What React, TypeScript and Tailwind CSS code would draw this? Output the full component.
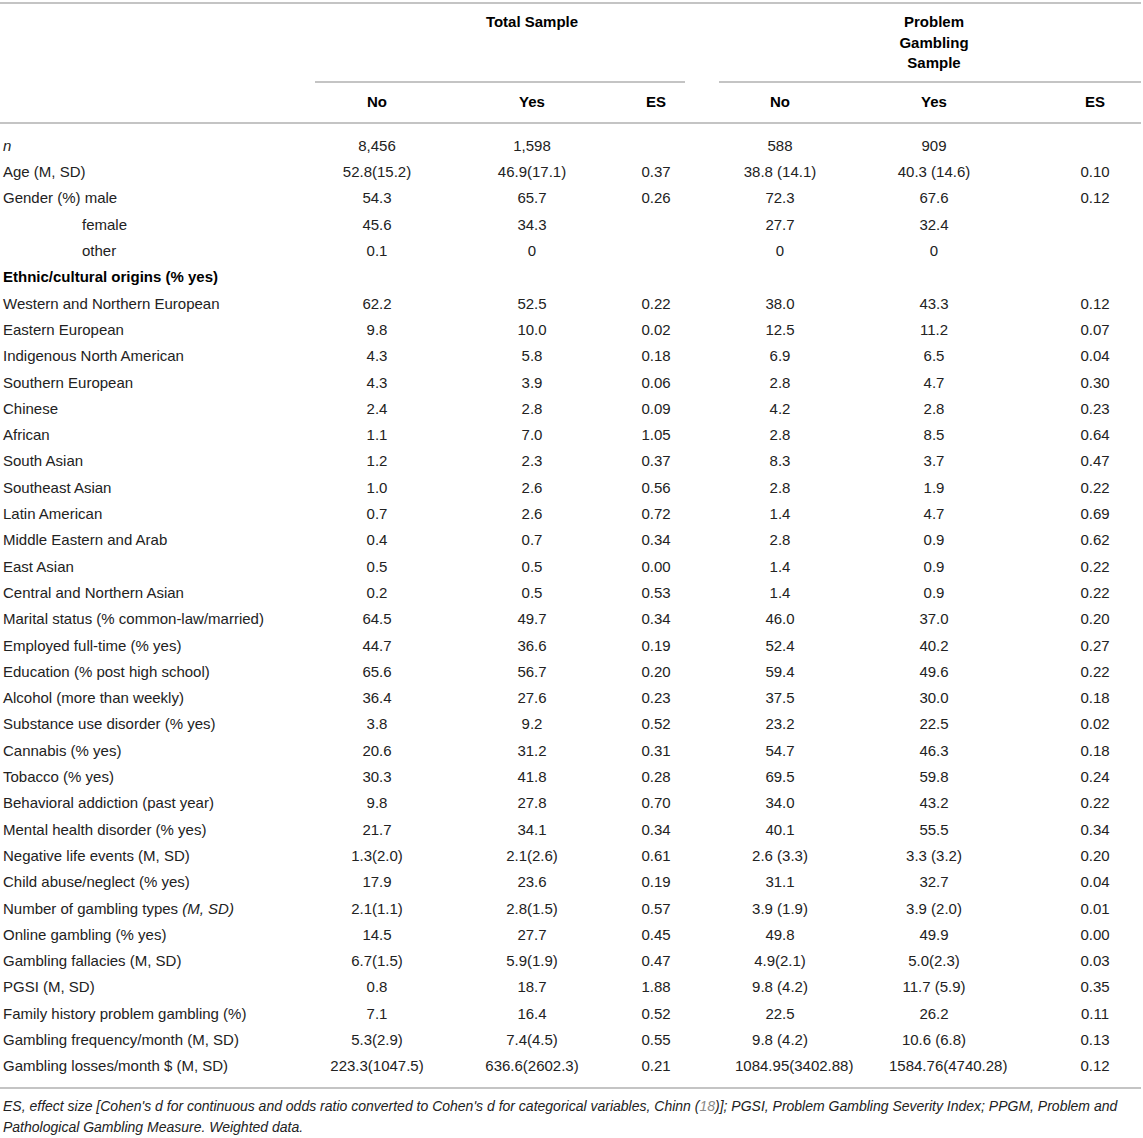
import React from "react";

type Row = {
  label: React.ReactNode;
  v: string[];
  indent?: boolean;
  bold?: boolean;
};

const rows: Row[] = [
  { label: <span className="italic">n</span>, v: ["8,456", "1,598", "", "588", "909", ""] },
  { label: "Age (M, SD)", v: ["52.8(15.2)", "46.9(17.1)", "0.37", "38.8 (14.1)", "40.3 (14.6)", "0.10"] },
  { label: "Gender (%) male", v: ["54.3", "65.7", "0.26", "72.3", "67.6", "0.12"] },
  { label: "female", indent: true, v: ["45.6", "34.3", "", "27.7", "32.4", ""] },
  { label: "other", indent: true, v: ["0.1", "0", "", "0", "0", ""] },
  { label: "Ethnic/cultural origins (% yes)", bold: true, v: ["", "", "", "", "", ""] },
  { label: "Western and Northern European", v: ["62.2", "52.5", "0.22", "38.0", "43.3", "0.12"] },
  { label: "Eastern European", v: ["9.8", "10.0", "0.02", "12.5", "11.2", "0.07"] },
  { label: "Indigenous North American", v: ["4.3", "5.8", "0.18", "6.9", "6.5", "0.04"] },
  { label: "Southern European", v: ["4.3", "3.9", "0.06", "2.8", "4.7", "0.30"] },
  { label: "Chinese", v: ["2.4", "2.8", "0.09", "4.2", "2.8", "0.23"] },
  { label: "African", v: ["1.1", "7.0", "1.05", "2.8", "8.5", "0.64"] },
  { label: "South Asian", v: ["1.2", "2.3", "0.37", "8.3", "3.7", "0.47"] },
  { label: "Southeast Asian", v: ["1.0", "2.6", "0.56", "2.8", "1.9", "0.22"] },
  { label: "Latin American", v: ["0.7", "2.6", "0.72", "1.4", "4.7", "0.69"] },
  { label: "Middle Eastern and Arab", v: ["0.4", "0.7", "0.34", "2.8", "0.9", "0.62"] },
  { label: "East Asian", v: ["0.5", "0.5", "0.00", "1.4", "0.9", "0.22"] },
  { label: "Central and Northern Asian", v: ["0.2", "0.5", "0.53", "1.4", "0.9", "0.22"] },
  { label: "Marital status (% common-law/married)", v: ["64.5", "49.7", "0.34", "46.0", "37.0", "0.20"] },
  { label: "Employed full-time (% yes)", v: ["44.7", "36.6", "0.19", "52.4", "40.2", "0.27"] },
  { label: "Education (% post high school)", v: ["65.6", "56.7", "0.20", "59.4", "49.6", "0.22"] },
  { label: "Alcohol (more than weekly)", v: ["36.4", "27.6", "0.23", "37.5", "30.0", "0.18"] },
  { label: "Substance use disorder (% yes)", v: ["3.8", "9.2", "0.52", "23.2", "22.5", "0.02"] },
  { label: "Cannabis (% yes)", v: ["20.6", "31.2", "0.31", "54.7", "46.3", "0.18"] },
  { label: "Tobacco (% yes)", v: ["30.3", "41.8", "0.28", "69.5", "59.8", "0.24"] },
  { label: "Behavioral addiction (past year)", v: ["9.8", "27.8", "0.70", "34.0", "43.2", "0.22"] },
  { label: "Mental health disorder (% yes)", v: ["21.7", "34.1", "0.34", "40.1", "55.5", "0.34"] },
  { label: "Negative life events (M, SD)", v: ["1.3(2.0)", "2.1(2.6)", "0.61", "2.6 (3.3)", "3.3 (3.2)", "0.20"] },
  { label: "Child abuse/neglect (% yes)", v: ["17.9", "23.6", "0.19", "31.1", "32.7", "0.04"] },
  {
    label: (
      <>
        Number of gambling types <span className="italic">(M, SD)</span>
      </>
    ),
    v: ["2.1(1.1)", "2.8(1.5)", "0.57", "3.9 (1.9)", "3.9 (2.0)", "0.01"],
  },
  { label: "Online gambling (% yes)", v: ["14.5", "27.7", "0.45", "49.8", "49.9", "0.00"] },
  { label: "Gambling fallacies (M, SD)", v: ["6.7(1.5)", "5.9(1.9)", "0.47", "4.9(2.1)", "5.0(2.3)", "0.03"] },
  { label: "PGSI (M, SD)", v: ["0.8", "18.7", "1.88", "9.8 (4.2)", "11.7 (5.9)", "0.35"] },
  { label: "Family history problem gambling (%)", v: ["7.1", "16.4", "0.52", "22.5", "26.2", "0.11"] },
  { label: "Gambling frequency/month (M, SD)", v: ["5.3(2.9)", "7.4(4.5)", "0.55", "9.8 (4.2)", "10.6 (6.8)", "0.13"] },
  {
    label: "Gambling losses/month $ (M, SD)",
    v: ["223.3(1047.5)", "636.6(2602.3)", "0.21", "1084.95(3402.88)", "1584.76(4740.28)", "0.12"],
  },
];

const gridCols = "grid grid-cols-[300px_154px_156px_92px_156px_152px_133px]";

function Cell({ value, idx }: { value: string; idx: number }) {
  if (idx === 5) {
    return <div className="pl-[37px] text-center whitespace-nowrap">{value}</div>;
  }
  if (idx === 3 || idx === 4) {
    return (
      <div className="flex justify-center">
        <div className="w-[90px] text-center whitespace-nowrap">{value}</div>
      </div>
    );
  }
  return <div className="text-center whitespace-nowrap">{value}</div>;
}

export default function App() {
  return (
    <div className="w-[1143px] bg-white font-['Liberation_Sans',Arial,sans-serif] text-[15px] text-[#222]">
      <div className="pt-[2px]">
        <div className="h-[2px] mr-[2px] bg-[#c4c4c4]" />
      </div>

      {/* Group header row */}
      <div className={`${gridCols} h-[77px] pt-[8px] font-bold text-black leading-[20.5px]`}>
        <div />
        <div />
        <div className="text-center whitespace-nowrap">Total Sample</div>
        <div />
        <div />
        <div className="flex justify-center">
          <div className="w-[100px] text-center">Problem Gambling Sample</div>
        </div>
        <div />
      </div>

      {/* Group underlines */}
      <div className="flex h-[2px]">
        <div className="ml-[315px] w-[370px] bg-[#c4c4c4]" />
        <div className="ml-[34px] w-[422px] bg-[#c4c4c4]" />
      </div>

      {/* Column header row */}
      <div className={`${gridCols} h-[39px] items-center font-bold text-black`}>
        <div />
        <div className="text-center">No</div>
        <div className="text-center">Yes</div>
        <div className="text-center">ES</div>
        <div className="text-center">No</div>
        <div className="text-center">Yes</div>
        <div className="pl-[37px] text-center">ES</div>
      </div>
      <div className="h-[2px] mr-[2px] bg-[#c4c4c4]" />

      {/* Body */}
      <div className="pt-[9px] pb-[7px]">
        {rows.map((r, i) => (
          <div key={i} className={`${gridCols} h-[26.3px] items-center`}>
            <div
              className={`whitespace-nowrap ${r.indent ? "pl-[82px]" : "pl-[3px]"} ${
                r.bold ? "font-bold text-black" : ""
              }`}
            >
              {r.label}
            </div>
            {r.v.map((val, j) => (
              <Cell key={j} value={val} idx={j} />
            ))}
          </div>
        ))}
      </div>
      <div className="h-[2px] mr-[2px] bg-[#c4c4c4]" />

      {/* Footnote */}
      <div className="pt-[7px] pl-[3px] pr-[6px] italic text-[14px] leading-[21px] text-[#222]">
        ES, effect size [Cohen's d for continuous and odds ratio converted to Cohen's d for categorical variables, Chinn (
        <span className="text-[#8a8a8a]">18</span>)]; PGSI, Problem Gambling Severity Index; PPGM, Problem and
        Pathological Gambling Measure. Weighted data.
      </div>
    </div>
  );
}
